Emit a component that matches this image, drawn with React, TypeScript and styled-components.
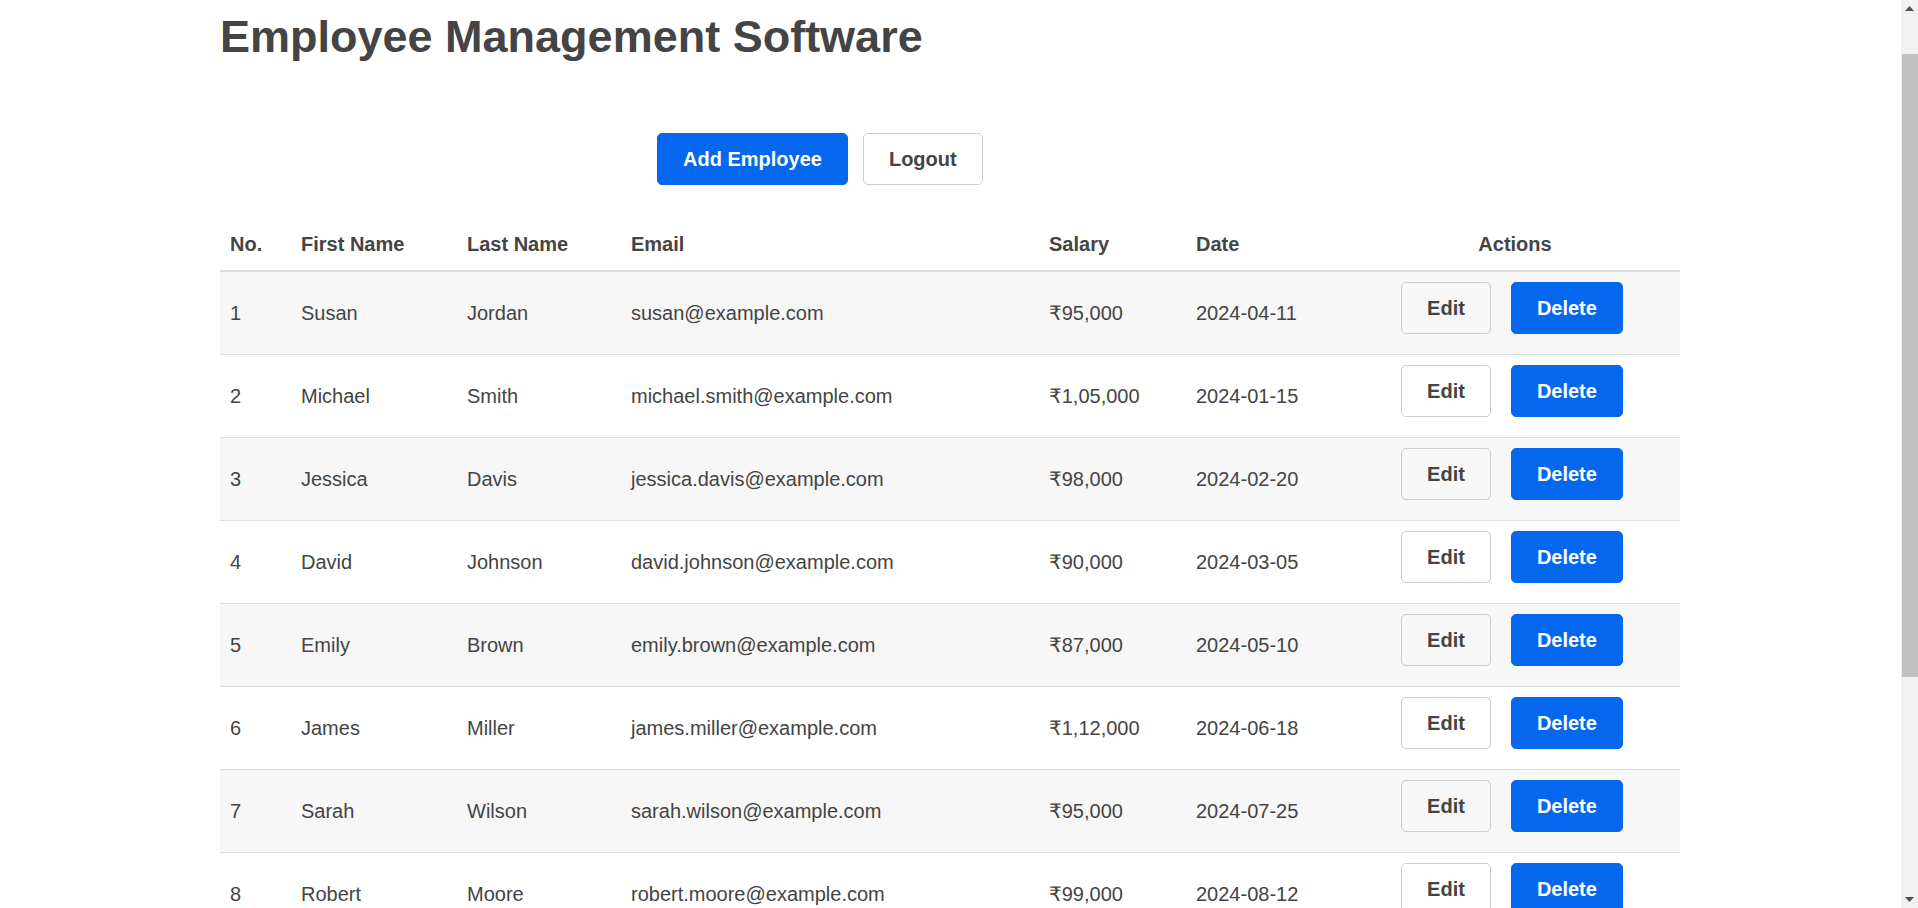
import React, { useLayoutEffect } from "react";
import styled, { createGlobalStyle } from "styled-components";

const GlobalStyle = createGlobalStyle`
  html, body {
    margin: 0;
    padding: 0;
    background: #ffffff;
    scroll-behavior: auto;
  }
  body {
    font-family: "Liberation Sans", Arial, "DejaVu Sans", sans-serif;
    color: #444444;
  }
`;

const Page = styled.div`
  padding: 64px 18px 119px 0;
`;

const Container = styled.div`
  width: 1460px;
  margin: 0 auto;
`;

const Title = styled.h1`
  margin: 0;
  font-size: 45px;
  line-height: 52px;
  font-weight: 700;
  color: #444444;
`;

const Toolbar = styled.div`
  display: flex;
  gap: 15px;
  margin-top: 70px;
  padding-left: 437px;
`;

const BaseButton = styled.button`
  box-sizing: border-box;
  height: 52px;
  padding: 0 25px;
  border-radius: 5px;
  font-family: "Liberation Sans", Arial, sans-serif;
  font-size: 20px;
  font-weight: 700;
  line-height: 23px;
  cursor: pointer;
`;

const PrimaryButton = styled(BaseButton)`
  background: #0467ee;
  border: 1px solid #0467ee;
  color: #ffffff;
`;

const OutlineButton = styled(BaseButton)`
  background: transparent;
  border: 1px solid #cccccc;
  color: #444444;
`;

const Table = styled.table`
  width: 1460px;
  margin-top: 36px;
  table-layout: fixed;
  border-collapse: separate;
  border-spacing: 0;
  font-size: 20px;
  line-height: 23px;
  color: #444444;
`;

const HeadCell = styled.th<{ $w: number; $center?: boolean }>`
  width: ${(p) => p.$w}px;
  box-sizing: border-box;
  padding: 12px 10px 14px;
  text-align: ${(p) => (p.$center ? "center" : "left")};
  font-weight: 700;
  border-bottom: 2px solid #dddddd;
`;

const Row = styled.tr<{ $striped: boolean }>`
  background: ${(p) => (p.$striped ? "#f7f7f7" : "#ffffff")};
`;

const Cell = styled.td`
  padding: 10px;
  vertical-align: middle;
  border-bottom: 1px solid #dddddd;
  white-space: nowrap;
`;

const ActionCell = styled.td`
  padding: 10px 16px 20px 10px;
  height: 52px;
  vertical-align: top;
  border-bottom: 1px solid #dddddd;
`;

const ActionGroup = styled.div`
  display: flex;
  justify-content: center;
  gap: 20px;
`;

/* Drawn window scrollbar (the headless browser hides its own) */
const ScrollTrack = styled.div`
  position: fixed;
  top: 0;
  right: 0;
  width: 17px;
  height: 100vh;
  background: #f1f1f1;
  display: flex;
  flex-direction: column;
  align-items: center;
`;

const ScrollArrow = styled.div<{ $down?: boolean }>`
  width: 17px;
  height: 17px;
  display: flex;
  align-items: center;
  justify-content: center;
  flex: none;
  ${(p) => (p.$down ? "margin-top: auto;" : "")}
`;

const ScrollThumb = styled.div`
  position: absolute;
  left: 1px;
  right: 0;
  top: 54px;
  height: 623px;
  background: #c1c1c1;
`;

type Employee = {
  first: string;
  last: string;
  email: string;
  salary: string;
  date: string;
};

const employees: Employee[] = [
  { first: "Susan", last: "Jordan", email: "susan@example.com", salary: "₹95,000", date: "2024-04-11" },
  { first: "Michael", last: "Smith", email: "michael.smith@example.com", salary: "₹1,05,000", date: "2024-01-15" },
  { first: "Jessica", last: "Davis", email: "jessica.davis@example.com", salary: "₹98,000", date: "2024-02-20" },
  { first: "David", last: "Johnson", email: "david.johnson@example.com", salary: "₹90,000", date: "2024-03-05" },
  { first: "Emily", last: "Brown", email: "emily.brown@example.com", salary: "₹87,000", date: "2024-05-10" },
  { first: "James", last: "Miller", email: "james.miller@example.com", salary: "₹1,12,000", date: "2024-06-18" },
  { first: "Sarah", last: "Wilson", email: "sarah.wilson@example.com", salary: "₹95,000", date: "2024-07-25" },
  { first: "Robert", last: "Moore", email: "robert.moore@example.com", salary: "₹99,000", date: "2024-08-12" },
  { first: "Linda", last: "Taylor", email: "linda.taylor@example.com", salary: "₹92,000", date: "2024-09-03" },
  { first: "William", last: "Anderson", email: "william.anderson@example.com", salary: "₹1,01,000", date: "2024-10-21" },
];

const columns: { label: string; w: number; center?: boolean }[] = [
  { label: "No.", w: 71 },
  { label: "First Name", w: 166 },
  { label: "Last Name", w: 164 },
  { label: "Email", w: 418 },
  { label: "Salary", w: 147 },
  { label: "Date", w: 164 },
  { label: "Actions", w: 330, center: true },
];

export default function App() {
  useLayoutEffect(() => {
    window.scrollTo(0, 53);
  }, []);

  return (
    <Page>
      <GlobalStyle />
      <Container>
        <Title>Employee Management Software</Title>
        <Toolbar>
          <PrimaryButton>Add Employee</PrimaryButton>
          <OutlineButton>Logout</OutlineButton>
        </Toolbar>
        <Table>
          <thead>
            <tr>
              {columns.map((c) => (
                <HeadCell key={c.label} $w={c.w} $center={c.center}>
                  {c.label}
                </HeadCell>
              ))}
            </tr>
          </thead>
          <tbody>
            {employees.map((e, i) => (
              <Row key={e.email} $striped={i % 2 === 0}>
                <Cell>{i + 1}</Cell>
                <Cell>{e.first}</Cell>
                <Cell>{e.last}</Cell>
                <Cell>{e.email}</Cell>
                <Cell>{e.salary}</Cell>
                <Cell>{e.date}</Cell>
                <ActionCell>
                  <ActionGroup>
                    <OutlineButton>Edit</OutlineButton>
                    <PrimaryButton>Delete</PrimaryButton>
                  </ActionGroup>
                </ActionCell>
              </Row>
            ))}
          </tbody>
        </Table>
      </Container>
      <ScrollTrack aria-hidden="true">
        <ScrollArrow>
          <svg width="9" height="5" viewBox="0 0 9 5">
            <polygon points="0,5 9,5 4.5,0" fill="#505050" />
          </svg>
        </ScrollArrow>
        <ScrollThumb />
        <ScrollArrow $down>
          <svg width="9" height="5" viewBox="0 0 9 5">
            <polygon points="0,0 9,0 4.5,5" fill="#505050" />
          </svg>
        </ScrollArrow>
      </ScrollTrack>
    </Page>
  );
}
